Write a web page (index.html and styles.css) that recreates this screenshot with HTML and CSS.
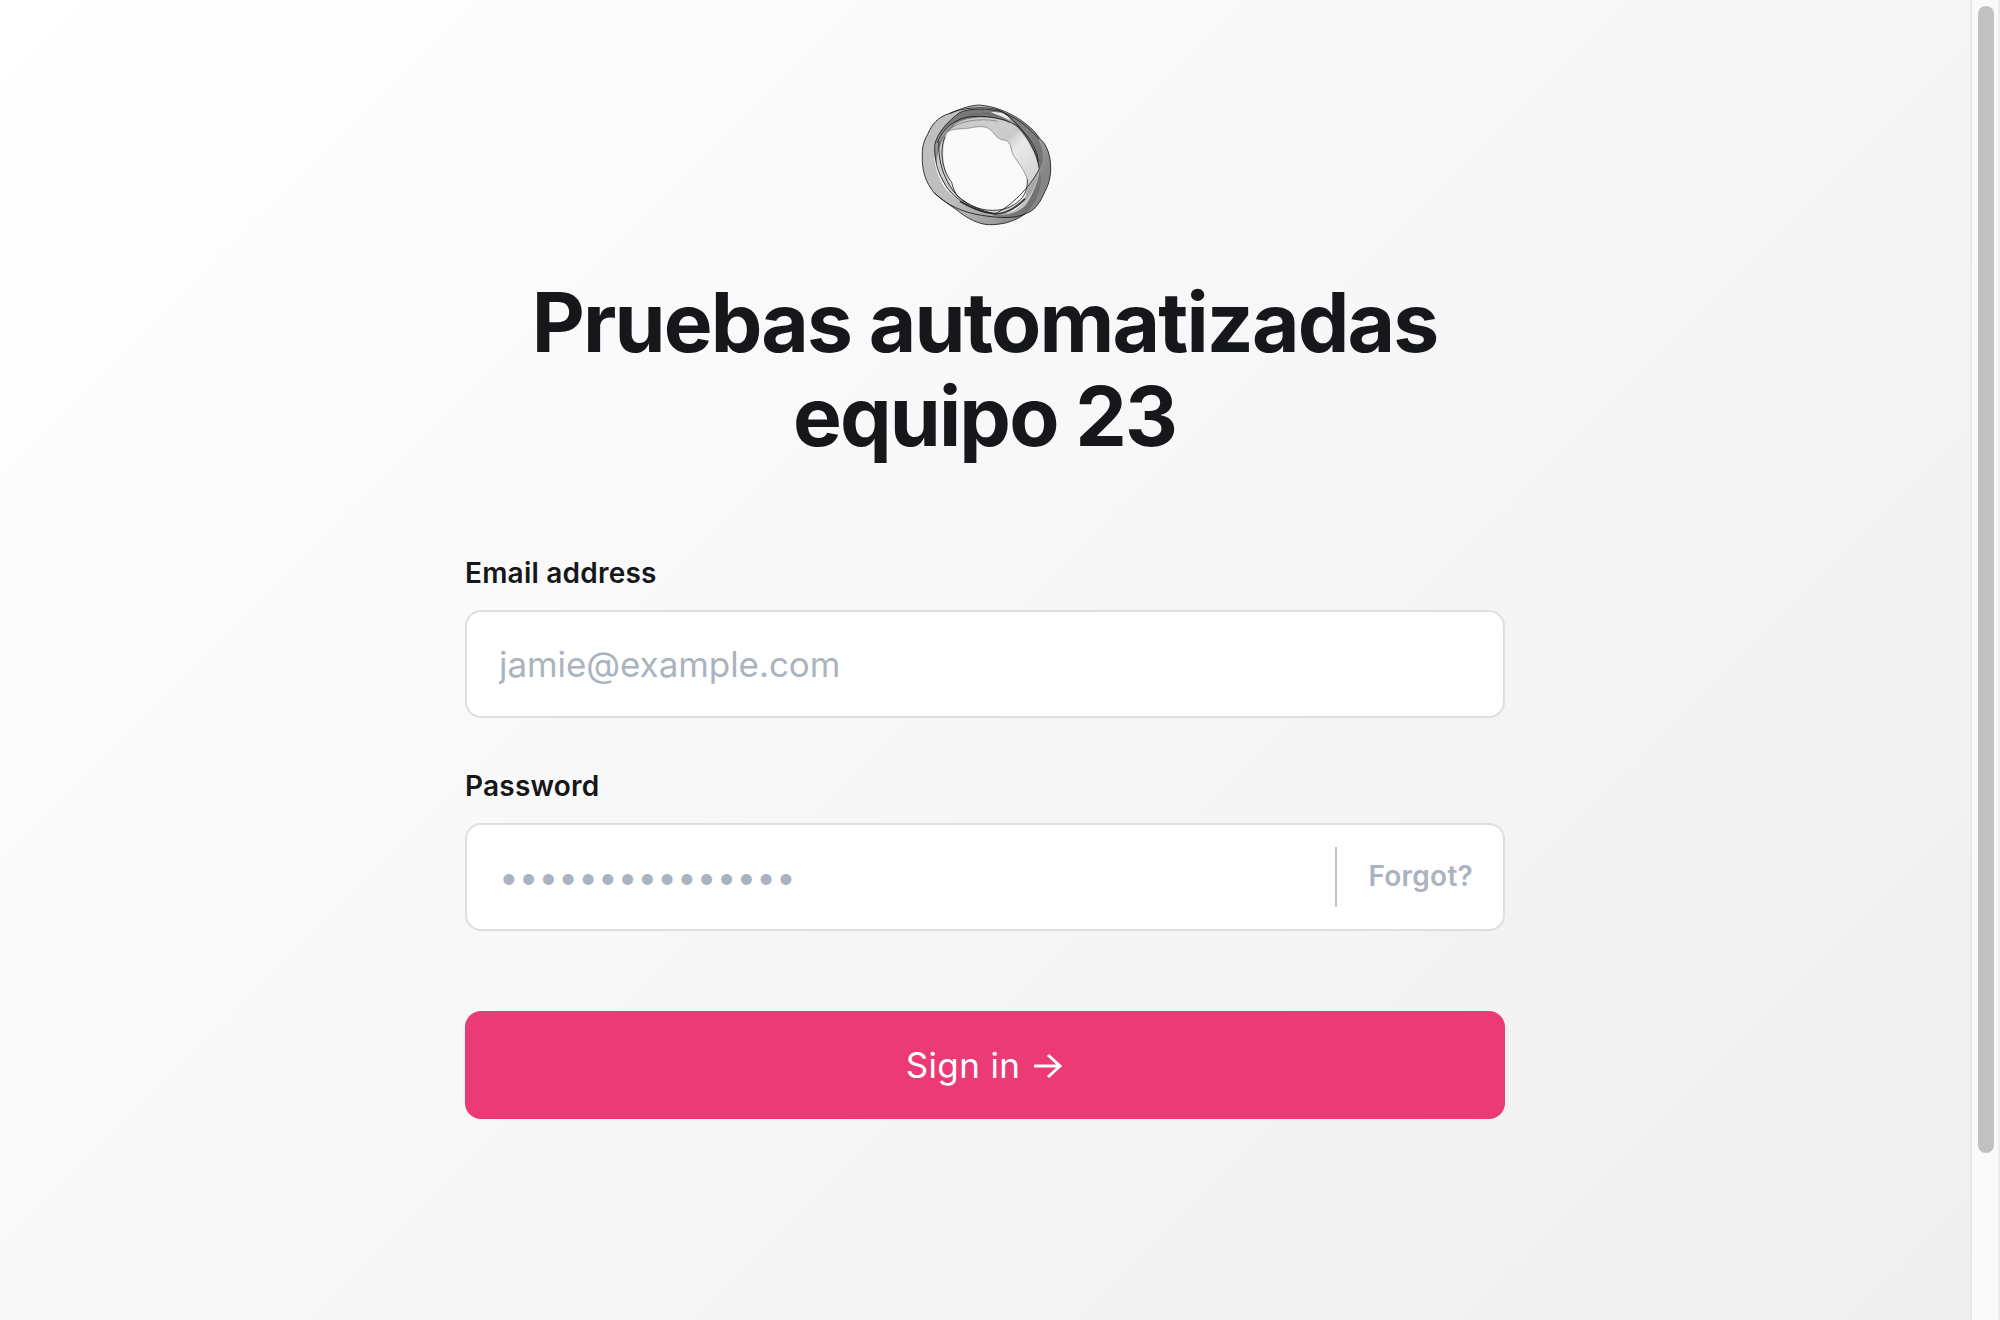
FILE: index.html
```html
<!DOCTYPE html>
<html lang="es">
<head>
<meta charset="utf-8">
<title>Pruebas automatizadas equipo 23</title>
<link rel="stylesheet" href="styles.css">
</head>
<body>
<main class="page">
  <form class="signin">
    <svg class="logo" viewBox="0 0 462 450" role="img" aria-label="Logo">
      <defs>
        <linearGradient id="band" x1="0" y1="0" x2="1" y2="0.5">
          <stop offset="0" stop-color="#777" stop-opacity=".45"/>
          <stop offset=".5" stop-color="#777" stop-opacity=".45"/>
          <stop offset=".8" stop-color="#666" stop-opacity=".6"/>
          <stop offset="1" stop-color="#555" stop-opacity=".7"/>
        </linearGradient>
        <linearGradient id="fold" x1="0" y1="0" x2="1" y2="1">
          <stop offset="0" stop-color="#888" stop-opacity=".45"/>
          <stop offset=".35" stop-color="#999" stop-opacity=".45"/>
          <stop offset=".48" stop-color="#999" stop-opacity=".5"/>
          <stop offset=".57" stop-color="#ccc" stop-opacity=".35"/>
          <stop offset="1" stop-color="#777" stop-opacity=".45"/>
        </linearGradient>
      </defs>
      <g fill-rule="evenodd">
        <path fill="url(#band)" d="M205 45C170 48 142 61 120 70C84 80 65 104 54 131C40 155 36 173 37 200C36 242 46 276 73 309C104 336 134 354 156 372C187 393 216 406 248 404C288 402 317 392 346 371C377 363 394 330 405 304C421 275 424 245 421 215C417 183 407 161 388 144C373 121 352 103 327 87C298 69 257 48 205 45ZM149 90C113 102 83 132 74 165C68 205 77 248 102 290C127 323 171 347 232 371C263 377 315 379 347 346C376 302 390 255 388 233C375 193 363 150 327 120C292 77 224 61 149 90Z"/>
        <path fill="url(#fold)" d="M115 125C135 79 181 67 240 66C298 70 329 91 350 125C378 165 389 203 388 236C379 289 361 322 330 346C287 376 222 370 183 351C132 328 95 289 83 234C73 181 85 145 115 125ZM115 125C99 153 98 185 101 216C106 248 119 278 132 304C163 337 198 353 222 359C266 370 314 351 343 324C352 308 352 288 352 269C345 243 326 219 310 196C302 178 304 158 288 151C263 150 256 134 247 125C233 108 214 108 190 112C164 119 130 113 115 125Z"/>
        <path fill="#333" fill-opacity=".5" d="M74 166C82 125 118 91 149 68C179 53 237 55 277 65L319 90C295 75 263 68 239 67C269 75 292 86 302 100C251 77 178 76 137 102C98 134 81 176 80 224C74 205 70 190 74 166Z"/>
        <path fill="#444" fill-opacity=".4" d="M277 65C334 86 366 118 386 151C400 180 405 210 388 238C381 193 344 134 305 90Z"/>
        <path fill="#444" fill-opacity=".3" d="M388 238C366 281 345 300 349 310C344 347 312 368 273 370L245 373C266 384 295 386 316 382L352 366C388 323 400 280 388 238Z"/>
        <path fill="#f4f4f4" fill-opacity=".92" d="M243 66C263 66 289 66 301 91C287 81 264 77 243 66Z"/>
      </g>
      <g fill="none" stroke="#1a1a1a" stroke-opacity=".85" stroke-width="3">
        <path d="M205 45C170 48 142 61 120 70C84 80 65 104 54 131C40 155 36 173 37 200C36 242 46 276 73 309C104 336 134 354 156 372C187 393 216 406 248 404C288 402 317 392 346 371C377 363 394 330 405 304C421 275 424 245 421 215C417 183 407 161 388 144C373 121 352 103 327 87C298 69 257 48 205 45Z"/>
        <path d="M74 166C82 125 118 91 149 68C179 53 237 55 277 65C325 96 360 150 380 200L388 237C366 281 315 340 262 368C245 372 230 370 205 361C150 338 116 308 99 272C82 242 74 213 74 166"/>
        <path d="M82 158C99 112 138 84 185 80C246 75 300 90 328 113C360 140 382 180 385 215"/>
        <path d="M73 309C110 345 160 368 215 376C266 384 315 387 347 371"/>
        <path d="M87 154C82 219 108 291 158 332C190 354 236 369 283 357C331 341 354 313 352 268"/>
        <path d="M105 140C86 187 99 244 125 277C128 291 133 306 143 319C178 347 218 365 254 371"/>
        <path d="M120 70C150 54 220 48 258 58C330 86 363 119 388 149"/>
        <path stroke-width="5" d="M150 334C180 353 214 365 254 372C285 371 318 355 345 326"/>
      </g>
      <g fill="none" stroke="#444" stroke-opacity=".65" stroke-width="2.2">
        <path d="M115 125C130 113 164 119 190 112C214 108 233 108 247 125C256 134 263 150 288 151C304 158 302 178 310 196C326 219 345 243 352 269"/>
        <path d="M110 125C140 93 210 82 263 94"/>
      </g>
    </svg>
    <h1 class="title">Pruebas automatizadas equipo 23</h1>
    <div class="field">
      <label class="label" for="email">Email address</label>
      <div class="control"><input class="input" id="email" type="email" placeholder="jamie@example.com"></div>
    </div>
    <div class="field">
      <label class="label" for="password">Password</label>
      <div class="control">
        <input class="input input-password" id="password" type="text" placeholder="•••••••••••••••">
        <button class="forgot" type="button">Forgot?</button>
      </div>
    </div>
    <button class="submit" type="button">
      <span>Sign in</span>
      <svg class="arrow" viewBox="0 0 28 26" aria-hidden="true"><path d="M0 13H26M14 2L26 13L14 24"/></svg>
    </button>
  </form>
</main>
<aside class="scrollbar"><div class="thumb"></div></aside>
</body>
</html>
```
FILE: styles.css
```css
* { box-sizing: border-box; }
body {
  margin: 0;
  height: 1320px;
  display: flex;
  overflow: hidden;
  font-family: Inter, "Liberation Sans", sans-serif;
  color: #15171a;
}
.page {
  flex: 1;
  display: flex;
  justify-content: center;
  align-items: flex-start;
  background: linear-gradient(135deg, #fff 0%, #eee 100%) 0 0 / 100% 1519px no-repeat;
}
.signin {
  width: 1040px;
  padding-top: 90px;
  display: flex;
  flex-direction: column;
}
.logo {
  width: 154px;
  height: 150px;
  align-self: center;
  margin-left: 4px;
}
.title {
  margin: 36px 0 90px;
  padding-right: 1px;
  font-size: 82px;
  line-height: 94px;
  font-weight: 700;
  letter-spacing: -1.85px;
  text-align: center;
}
.field {
  display: flex;
  flex-direction: column;
  gap: 17px;
  margin-bottom: 49px;
}
.label {
  font-size: 28px;
  line-height: 39px;
  font-weight: 600;
  letter-spacing: 0.22px;
}
.control {
  height: 108px;
  display: flex;
  align-items: center;
  padding: 0 30px 0 32px;
  background: #fff;
  border: 2px solid #dddedf;
  border-radius: 16px;
}
.input {
  flex: 1;
  min-width: 0;
  height: 100%;
  padding: 0;
  border: 0;
  outline: 0;
  background: transparent;
  font: 400 35px Inter, "Liberation Sans", sans-serif;
  letter-spacing: -0.07px;
}
.input::placeholder { color: #abb4be; opacity: 1; }
.input-password { letter-spacing: 0.1px; }
.forgot {
  height: 60px;
  padding: 0 0 2px 31px;
  border: 0;
  border-left: 2px solid #c5c5c5;
  background: transparent;
  font: 600 28px Inter, "Liberation Sans", sans-serif;
  letter-spacing: 0.25px;
  color: #abb4be;
}
.submit {
  height: 108px;
  margin-top: 31px;
  padding: 0 8px 0 6px;
  display: flex;
  justify-content: center;
  align-items: center;
  gap: 14px;
  border: 0;
  border-radius: 16px;
  background: #eb3a75;
  color: #fff;
  font: 400 35px Inter, "Liberation Sans", sans-serif;
  letter-spacing: 0.35px;
}
.arrow {
  width: 28px;
  height: 26px;
  margin-top: 1px;
  fill: none;
  stroke: #fff;
  stroke-width: 3;
}
.scrollbar {
  width: 30px;
  padding: 6px 4px 0 6px;
  border-left: 2px solid #e8e8e8;
  border-right: 2px solid #ededed;
  background: #fafafa;
}
.thumb {
  height: 1147px;
  border-radius: 8px;
  background: #c1c1c1;
}
```
